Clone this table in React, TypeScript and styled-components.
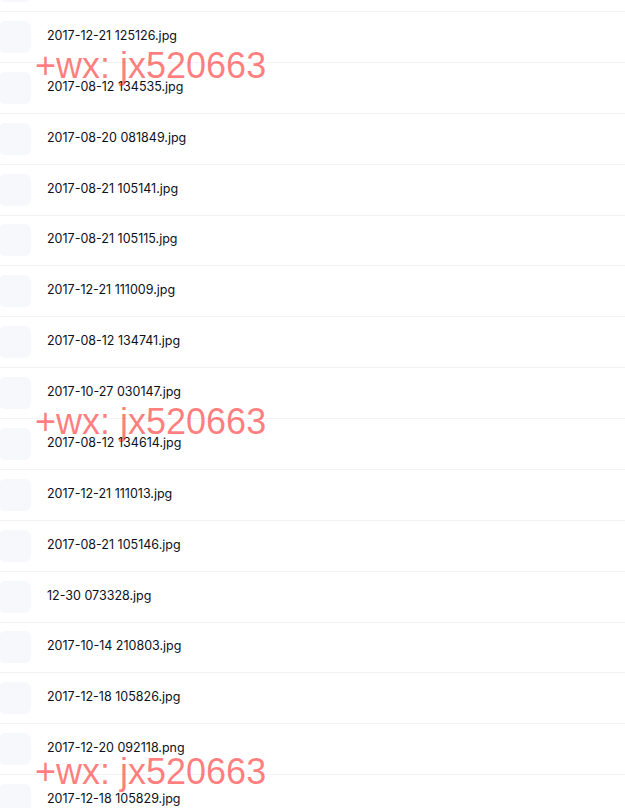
import React from "react";
import styled, { createGlobalStyle } from "styled-components";

const Global = createGlobalStyle`
  html, body { margin: 0; padding: 0; background: #ffffff; overflow: hidden; }
  body { font-family: Inter, "Noto Sans", sans-serif; }
`;

const Page = styled.div`
  position: relative;
  width: 625px;
  height: 808px;
  overflow: hidden;
  background: #ffffff;
`;

const List = styled.ul`
  list-style: none;
  margin: -38.875px 0 0 0;
  padding: 0;
`;

const Row = styled.li`
  box-sizing: border-box;
  height: 50.875px;
  display: flex;
  align-items: center;
  gap: 16px;
  margin-left: -1px;
  border-bottom: 1px solid #f2f3f5;
`;

const Thumb = styled.div`
  flex: 0 0 32px;
  width: 32px;
  height: 32px;
  border-radius: 6px;
  background: #f7f8fc;
`;

const Name = styled.span`
  font-family: Inter, "Noto Sans", sans-serif;
  font-size: 12.5px;
  font-weight: 400;
  line-height: 16px;
  padding-bottom: 2px;
  color: #0b1020;
  white-space: nowrap;
`;

const Watermark = styled.div<{ $top: number }>`
  position: absolute;
  left: 35px;
  top: ${(p) => p.$top}px;
  font-family: "Liberation Sans", Arial, sans-serif;
  font-size: 36px;
  line-height: 36px;
  color: rgba(255, 0, 0, 0.5);
  white-space: nowrap;
  pointer-events: none;
`;

const files = [
  "",
  "2017-12-21 125126.jpg",
  "2017-08-12 134535.jpg",
  "2017-08-20 081849.jpg",
  "2017-08-21 105141.jpg",
  "2017-08-21 105115.jpg",
  "2017-12-21 111009.jpg",
  "2017-08-12 134741.jpg",
  "2017-10-27 030147.jpg",
  "2017-08-12 134614.jpg",
  "2017-12-21 111013.jpg",
  "2017-08-21 105146.jpg",
  "12-30 073328.jpg",
  "2017-10-14 210803.jpg",
  "2017-12-18 105826.jpg",
  "2017-12-20 092118.png",
  "2017-12-18 105829.jpg",
];

export default function App() {
  return (
    <Page>
      <Global />
      <List>
        {files.map((f, i) => (
          <Row key={i}>
            <Thumb />
            <Name>{f}</Name>
          </Row>
        ))}
      </List>
      <Watermark $top={47.5}>+wx: jx520663</Watermark>
      <Watermark $top={403.5}>+wx: jx520663</Watermark>
      <Watermark $top={753.5}>+wx: jx520663</Watermark>
    </Page>
  );
}
